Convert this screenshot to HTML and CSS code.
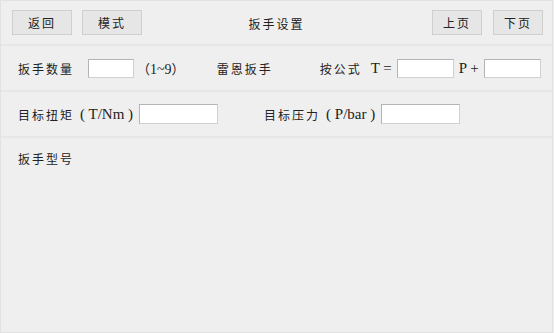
FILE: index.html
```html
<!DOCTYPE html>
<html lang="zh-CN">
<head>
    <meta charset="UTF-8">
    <meta name="viewport" content="width=device-width, initial-scale=1.0">
    <title>扳手设置</title>
    <link rel="stylesheet" href="styles.css">
</head>
<body>
    <div class="panel">
        <div class="topbar">
            <div class="left">
                <button class="btn">返回</button>
                <button class="btn">模式</button>
            </div>
            <div class="title">扳手设置</div>
            <div class="right">
                <button class="btn small">上页</button>
                <button class="btn small">下页</button>
            </div>
        </div>

        <div class="row">
            <span class="cn">扳手数量</span>
            <input class="box short" type="text">
            <span class="hint"><span class="paren">（</span>1~9<span class="paren">）</span></span>
            <span class="cn brand">雷恩扳手</span>
            <span class="cn formula">按公式</span>
            <span class="lat">T =</span>
            <input class="box mid" type="text">
            <span class="lat">P +</span>
            <input class="box mid" type="text">
        </div>

        <div class="row">
            <span class="cn">目标扭矩</span>
            <span class="lat unit">( T/Nm )</span>
            <input class="box long" type="text">
            <span class="cn second">目标压力</span>
            <span class="lat unit">( P/bar )</span>
            <input class="box long" type="text">
        </div>

        <div class="model">
            <span class="cn">扳手型号</span>
        </div>
    </div>
</body>
</html>
```

FILE: styles.css
```css
body { margin: 0; background: #efefef; font-family: "Liberation Serif", "Noto Sans CJK SC", serif; color: #222; }
.panel { width: 551px; height: 331px; border: 1px solid #e2e2e2; background: #efefef; display: flex; flex-direction: column; }
.topbar { display: grid; grid-template-columns: 1fr auto 1fr; align-items: center; height: 43px; border-bottom: 2px solid #e6e6e6; }
.left { display: flex; gap: 10px; padding-left: 11px; }
.right { display: flex; gap: 11px; justify-content: flex-end; padding-right: 9px; }
.title { font-family: "Noto Sans CJK SC", sans-serif; font-size: 12px; letter-spacing: 2px; padding-top: 1px; }
.btn { width: 60px; height: 25px; background: #e6e6e6; border: 1px solid #cfcfcf; font-family: "Noto Sans CJK SC", sans-serif; font-size: 12px; letter-spacing: 2px; color: #222; padding: 0; }
.btn.small { width: 50px; }
.row { display: flex; align-items: center; height: 44px; padding-left: 17px; border-bottom: 2px solid #e6e6e6; font-size: 15px; }
.cn { font-family: "Noto Sans CJK SC", sans-serif; font-size: 12px; letter-spacing: 2px; }
.lat { margin: 0 5px; }
.box { height: 19px; box-sizing: border-box; background: #fff; border: 1px solid #b4b4b4; border-right-color: #d0d0d0; border-bottom-color: #d0d0d0; padding: 0; }
.box.short { width: 46px; margin-left: 14px; }
.box.mid { width: 57px; }
.box.long { width: 79px; height: 20px; }
.hint { margin-left: 3px; font-size: 14px; }
.paren { font-family: "Noto Sans CJK SC", sans-serif; font-size: 13px; }
.brand { margin-left: 32px; }
.formula { margin-left: 47px; margin-right: 4px; }
.unit { margin: 0 6px 0 6px; }
.second { margin-left: 46px; }
.model { padding: 12px 0 0 17px; }
```
